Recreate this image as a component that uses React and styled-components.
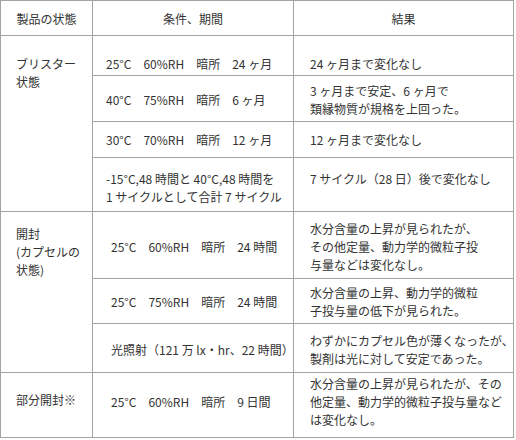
import React from 'react';
import styled, { createGlobalStyle } from 'styled-components';

const GlobalStyle = createGlobalStyle`
  html, body {
    margin: 0;
    padding: 0;
    background: #fff;
  }
`;

const Table = styled.table`
  width: 513px;
  table-layout: fixed;
  border-collapse: collapse;
  font-family: "Noto Sans CJK JP", "Noto Sans", sans-serif;
  font-size: 12px;
  line-height: 18px;
  color: #333;
`;

const Col = styled.col`
  width: ${(p) => p.$w}px;
`;

const Row = styled.tr`
  height: ${(p) => p.$h}px;
`;

const HeadCell = styled.th`
  border: 1px solid #a3a3a3;
  padding: 2px 0 0;
  font-weight: normal;
  text-align: center;
  vertical-align: middle;
`;

const Cell = styled.td`
  border: 1px solid #a3a3a3;
  padding: ${(p) => p.$pt || 0}px 0 ${(p) => p.$pb || 0}px ${(p) => p.$pl}px;
  vertical-align: ${(p) => (p.$top ? 'top' : 'middle')};
  white-space: nowrap;
  overflow: visible;
`;

const StateCell = (props) => <Cell $pl={15} {...props} />;
const CondCell = ({ $indent, ...props }) => <Cell $pl={$indent ? 18 : 13} {...props} />;
const ResultCell = (props) => <Cell $pl={16} {...props} />;

const rows = [
  {
    h: 40, pt: 16,
    state: { text: ['ブリスター', '状態'], span: 4, top: 19 },
    cond: ['25°C　60%RH　暗所　24 ヶ月'],
    result: ['24 ヶ月まで変化なし'],
  },
  {
    h: 46, pt: 2,
    cond: ['40°C　75%RH　暗所　6 ヶ月'],
    result: ['3 ヶ月まで安定、6 ヶ月で', '類縁物質が規格を上回った。'],
  },
  {
    h: 36,
    cond: ['30°C　70%RH　暗所　12 ヶ月'],
    result: ['12 ヶ月まで変化なし'],
  },
  {
    h: 54, pt: 6,
    cond: ['-15°C,48 時間と 40°C,48 時間を', '1 サイクルとして合計 7 サイクル'],
    result: ['7 サイクル（28 日）後で変化なし', '\u00a0'],
  },
  {
    h: 67, pt: 4, indent: true,
    state: { text: ['開封', '(カプセルの', '状態)'], span: 3, top: 13 },
    cond: ['25°C　60%RH　暗所　24 時間'],
    result: ['水分含量の上昇が見られたが、', 'その他定量、動力学的微粒子投', '与量などは変化なし。'],
  },
  {
    h: 45, pt: 2, indent: true,
    cond: ['25°C　75%RH　暗所　24 時間'],
    result: ['水分含量の上昇、動力学的微粒', '子投与量の低下が見られた。'],
  },
  {
    h: 49, pt: 3, indent: true,
    cond: ['光照射（121 万 lx・hr、22 時間）'],
    result: ['わずかにカプセル色が薄くなったが、', '製剤は光に対して安定であった。'],
  },
  {
    h: 65, pb: 6, indent: true,
    state: { text: ['部分開封※'], span: 1, pb: 11 },
    cond: ['25°C　60%RH　暗所　9 日間'],
    result: ['水分含量の上昇が見られたが、その', '他定量、動力学的微粒子投与量など', 'は変化なし。'],
  },
];

const Lines = ({ lines }) =>
  lines.map((line, i) => (
    <React.Fragment key={i}>
      {i > 0 && <br />}
      {line}
    </React.Fragment>
  ));

export default function App() {
  return (
    <>
      <GlobalStyle />
      <Table>
        <colgroup>
          <Col $w={92} />
          <Col $w={201} />
          <Col $w={220} />
        </colgroup>
        <thead>
          <Row $h={35}>
            <HeadCell>製品の状態</HeadCell>
            <HeadCell>条件、期間</HeadCell>
            <HeadCell>結果</HeadCell>
          </Row>
        </thead>
        <tbody>
          {rows.map((r, i) => (
            <Row key={i} $h={r.h}>
              {r.state && (
                <StateCell
                  rowSpan={r.state.span}
                  $top={!!r.state.top}
                  $pt={r.state.top}
                  $pb={r.state.pb}
                >
                  <Lines lines={r.state.text} />
                </StateCell>
              )}
              <CondCell $indent={r.indent} $pt={r.pt} $pb={r.pb}>
                <Lines lines={r.cond} />
              </CondCell>
              <ResultCell $pt={r.pt} $pb={r.pb}>
                <Lines lines={r.result} />
              </ResultCell>
            </Row>
          ))}
        </tbody>
      </Table>
    </>
  );
}
